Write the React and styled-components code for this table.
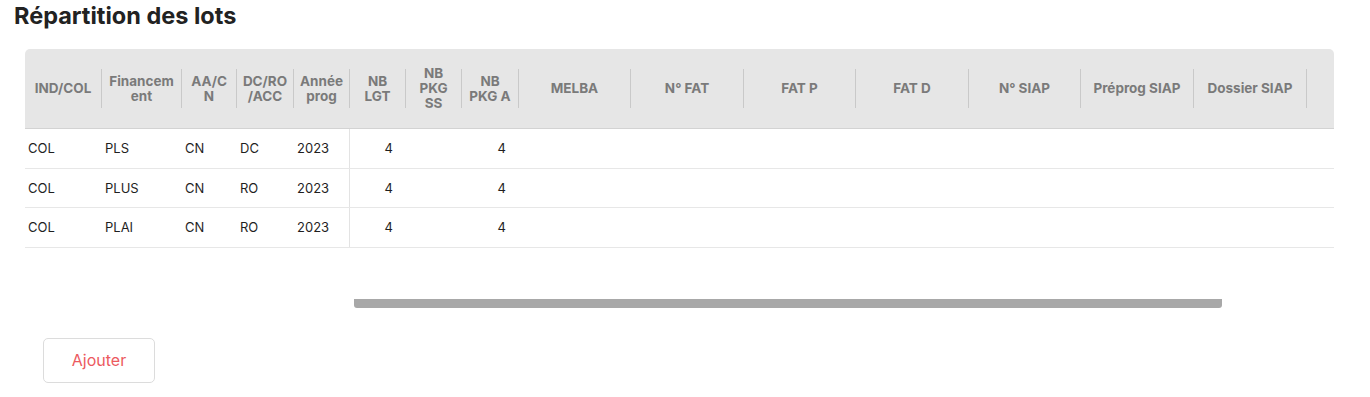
import React from 'react'
import styled, { createGlobalStyle } from 'styled-components'

const GlobalStyle = createGlobalStyle`
  body {
    margin: 0;
    background: #fff;
    font-family: Inter, "Noto Sans", sans-serif;
  }
`

// header labels keep the wrapping seen in the narrow columns
const columns = [
  { key: 'type', label: 'IND/COL', width: 77 },
  { key: 'fin', label: 'Financem\nent', width: 80 },
  { key: 'aa', label: 'AA/C\nN', width: 55 },
  { key: 'dc', label: 'DC/RO\n/ACC', width: 57 },
  { key: 'year', label: 'Année\nprog', width: 56, edge: true },
  { key: 'lgt', label: 'NB\nLGT', width: 56, num: true },
  { key: 'pkgss', label: 'NB\nPKG\nSS', width: 56, num: true },
  { key: 'pkga', label: 'NB\nPKG A', width: 57, num: true },
  { key: 'melba', label: 'MELBA', width: 112 },
  { key: 'nfat', label: 'N° FAT', width: 113 },
  { key: 'fatp', label: 'FAT P', width: 112 },
  { key: 'fatd', label: 'FAT D', width: 113 },
  { key: 'nsiap', label: 'N° SIAP', width: 112 },
  { key: 'preprog', label: 'Préprog SIAP', width: 113 },
  { key: 'dossier', label: 'Dossier SIAP', width: 113 },
]

const lots = [
  { type: 'COL', fin: 'PLS', aa: 'CN', dc: 'DC', year: '2023', lgt: 4, pkga: 4 },
  { type: 'COL', fin: 'PLUS', aa: 'CN', dc: 'RO', year: '2023', lgt: 4, pkga: 4 },
  { type: 'COL', fin: 'PLAI', aa: 'CN', dc: 'RO', year: '2023', lgt: 4, pkga: 4 },
]

const gridTemplate = columns.map(c => `${c.width}px`).join(' ') + ' 1fr'

const Page = styled.div`
  padding: 0 36px 14px 14px;
`

const Title = styled.h1`
  margin: 0;
  font-size: 23.5px;
  line-height: 32px;
  font-weight: 700;
  color: #222;
`

const Card = styled.div`
  margin: 17px 0 0 11px;
`

const HeadRow = styled.div`
  display: grid;
  grid-template-columns: ${gridTemplate};
  align-items: center;
  height: 79px;
  background: #e6e6e6;
  border-radius: 5px 5px 0 0;
  border-bottom: 1px solid #d3d3d3;
`

const HeadCell = styled.div`
  display: flex;
  align-items: center;
  justify-content: center;
  height: 39px;
  padding: 0 4px;
  border-right: 1px solid #c9c9c9;
  text-align: center;
  white-space: pre;
  font-size: 13.5px;
  line-height: 15px;
  font-weight: 700;
  color: #7a7a7a;
`

const BodyRow = styled.div`
  display: grid;
  grid-template-columns: ${gridTemplate};
  height: 38.5px;
  border-bottom: 1px solid #e7e7e7;
`

const BodyCell = styled.div`
  display: flex;
  align-items: center;
  justify-content: ${p => (p.$num ? 'flex-end' : 'flex-start')};
  padding: ${p => (p.$num ? '0 13px 0 0' : '0 3px')};
  border-right: ${p => (p.$edge ? '1px solid #e3e3e3' : 'none')};
  font-size: 13px;
  color: #1f1f1f;
`

const Scrollbar = styled.div`
  margin: 51px 0 0 329px;
  width: 868px;
  height: 9px;
  background: #a8a8a8;
  border-radius: 0 0 3px 3px;
`

const AddButton = styled.button`
  margin: 30px 0 0 18px;
  width: 112px;
  height: 45px;
  background: #fff;
  border: 1px solid #dcdcdc;
  border-radius: 5px;
  font-family: inherit;
  font-size: 16px;
  color: #ec5a5f;
  cursor: pointer;
`

const App = () => {
  return (
    <Page>
      <GlobalStyle />
      <Title>Répartition des lots</Title>
      <Card>
        <HeadRow>
          {columns.map(c => (
            <HeadCell key={c.key}>{c.label}</HeadCell>
          ))}
        </HeadRow>
        {lots.map((lot, i) => (
          <BodyRow key={i}>
            {columns.map(c => (
              <BodyCell key={c.key} $num={c.num} $edge={c.edge}>
                {lot[c.key]}
              </BodyCell>
            ))}
            <BodyCell />
          </BodyRow>
        ))}
        <Scrollbar />
        <AddButton>Ajouter</AddButton>
      </Card>
    </Page>
  )
}

export default App
